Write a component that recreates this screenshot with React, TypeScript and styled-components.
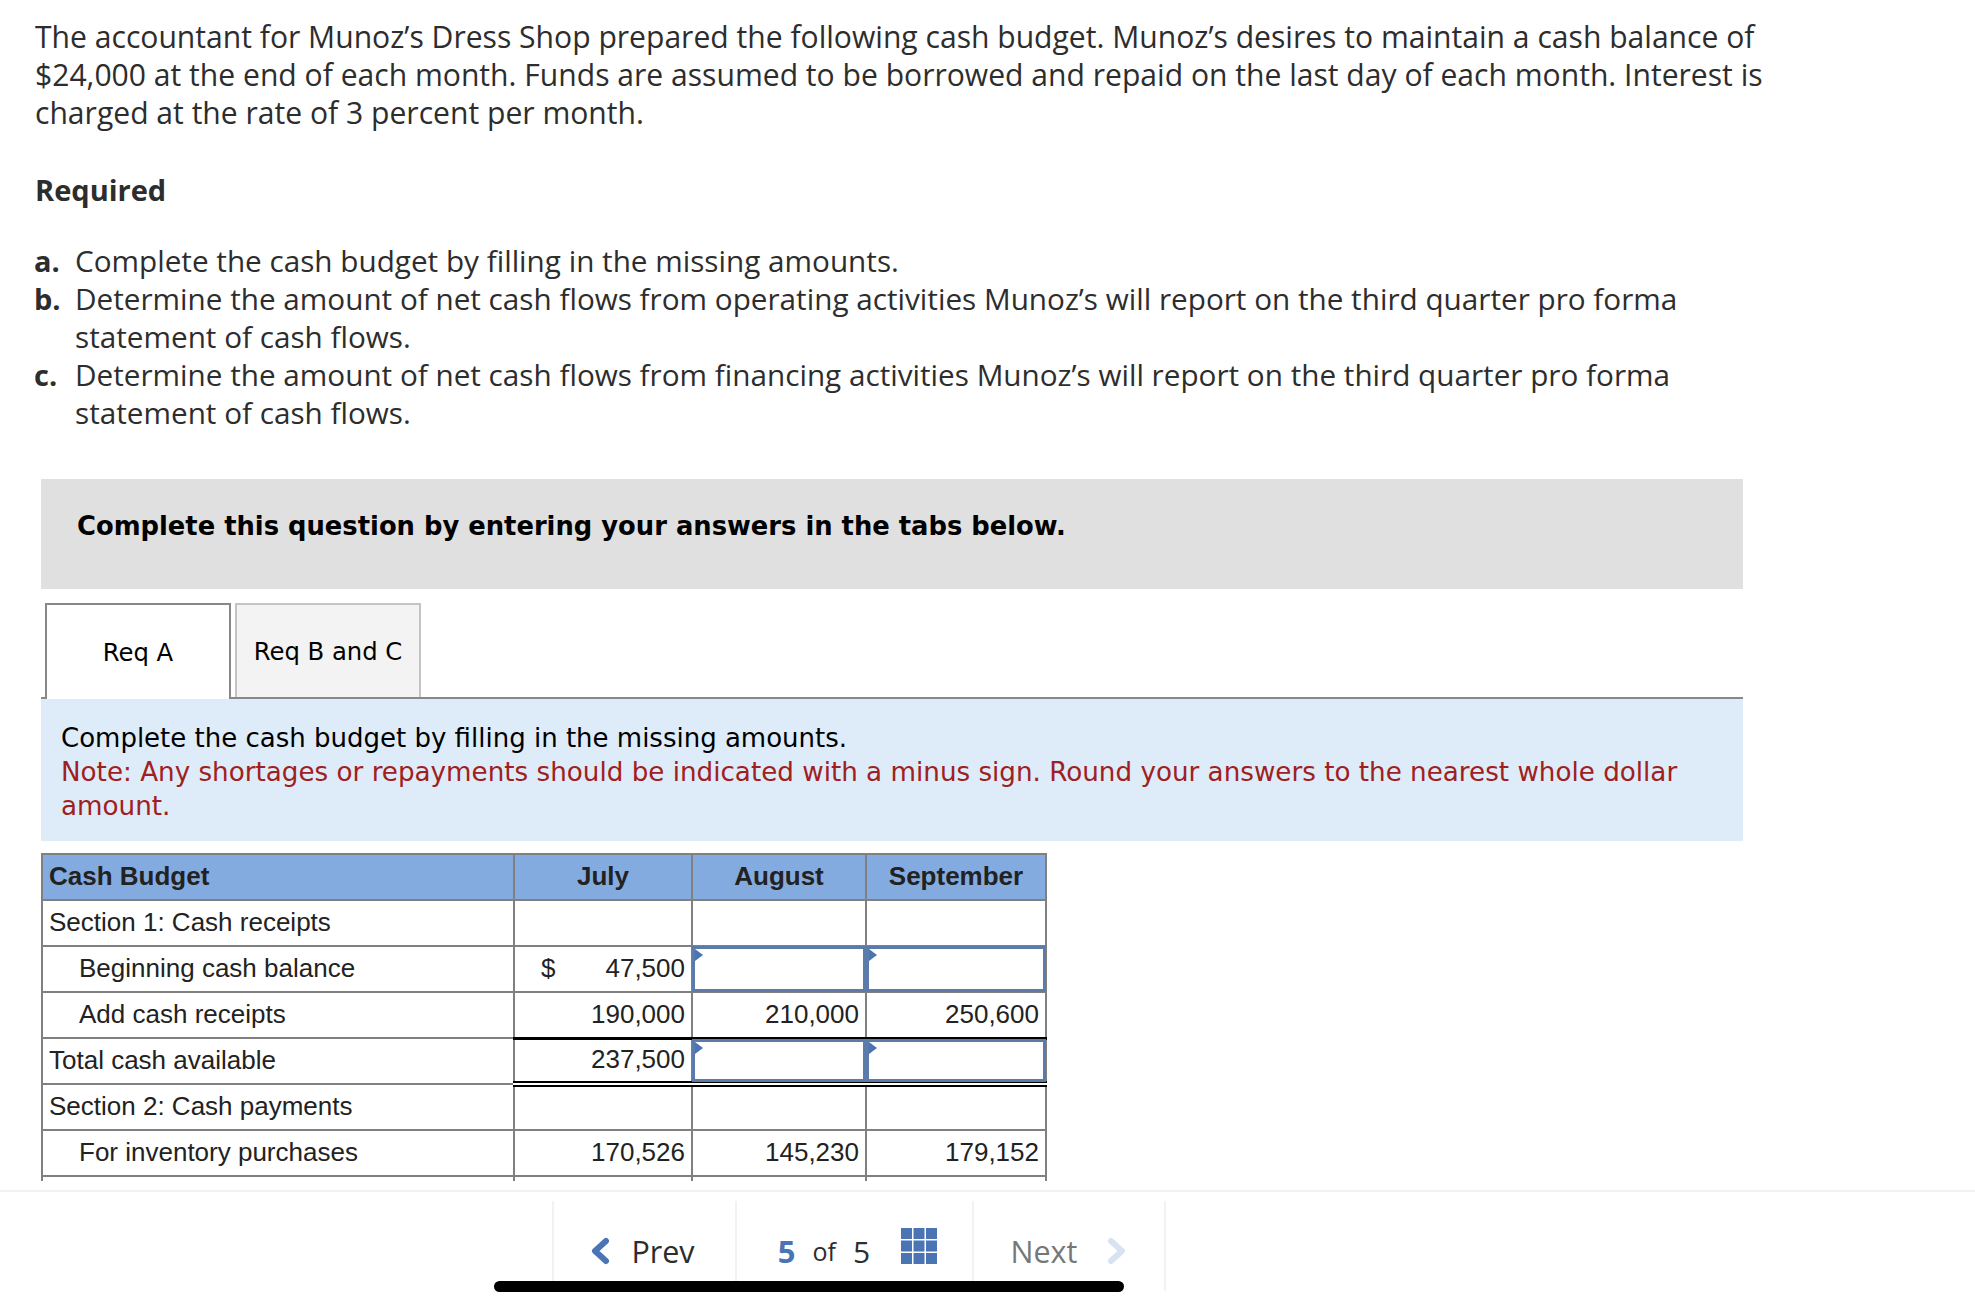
import React from 'react';
import styled, { createGlobalStyle } from 'styled-components';

const GlobalStyle = createGlobalStyle`
  html, body {
    margin: 0;
    padding: 0;
    background: #fff;
  }
`;

interface IRow {
  label: string;
  indent?: boolean;
  total?: boolean;
  dollar?: boolean;
  values: (string | null | undefined)[];
}

// null = answer box, undefined = empty cell
const rows: IRow[] = [
  { label: 'Section 1: Cash receipts', values: [undefined, undefined, undefined] },
  { label: 'Beginning cash balance', indent: true, dollar: true, values: ['47,500', null, null] },
  { label: 'Add cash receipts', indent: true, values: ['190,000', '210,000', '250,600'] },
  { label: 'Total cash available', total: true, values: ['237,500', null, null] },
  { label: 'Section 2: Cash payments', values: [undefined, undefined, undefined] },
  { label: 'For inventory purchases', indent: true, values: ['170,526', '145,230', '179,152'] },
  { label: '', indent: true, values: [undefined, undefined, undefined] },
];

export default function App(): JSX.Element {
  return (
    <Page>
      <GlobalStyle />
      <Content>
        <Intro>
          The accountant for Munoz’s Dress Shop prepared the following cash budget. Munoz’s desires
          to maintain a cash balance of $24,000 at the end of each month. Funds are assumed to be
          borrowed and repaid on the last day of each month. Interest is charged at the rate of 3
          percent per month.
        </Intro>
        <Required>Required</Required>
        <Parts>
          <Part>
            <PartKey>a.</PartKey>
            <span>Complete the cash budget by filling in the missing amounts.</span>
          </Part>
          <Part>
            <PartKey>b.</PartKey>
            <span>
              Determine the amount of net cash flows from operating activities Munoz’s will report
              on the third quarter pro forma statement of cash flows.
            </span>
          </Part>
          <Part>
            <PartKey>c.</PartKey>
            <span>
              Determine the amount of net cash flows from financing activities Munoz’s will report
              on the third quarter pro forma statement of cash flows.
            </span>
          </Part>
        </Parts>

        <Question>
          <Banner>Complete this question by entering your answers in the tabs below.</Banner>
          <Tabs>
            <Tab $active>Req A</Tab>
            <Tab>Req B and C</Tab>
          </Tabs>
          <Instructions>
            Complete the cash budget by filling in the missing amounts.
            <Note>
              Note: Any shortages or repayments should be indicated with a minus sign. Round your
              answers to the nearest whole dollar amount.
            </Note>
          </Instructions>
          <TableClip>
            <Budget>
              <colgroup>
                <col style={{ width: 472 }} />
                <col style={{ width: 178 }} />
                <col style={{ width: 174 }} />
                <col style={{ width: 180 }} />
              </colgroup>
              <thead>
                <tr>
                  <HeadCell $left>Cash Budget</HeadCell>
                  <HeadCell>July</HeadCell>
                  <HeadCell>August</HeadCell>
                  <HeadCell>September</HeadCell>
                </tr>
              </thead>
              <tbody>
                {rows.map(row => (
                  <tr key={row.label || 'next'}>
                    <LabelCell $indent={row.indent}>{row.label}</LabelCell>
                    {row.values.map((value, i) => (
                      <AmountCell key={i} $total={row.total} $answer={value === null}>
                        {value === null ? (
                          <AnswerBox />
                        ) : (
                          <Amount>
                            {row.dollar && i === 0 ? <span>$</span> : <span />}
                            <span>{value}</span>
                          </Amount>
                        )}
                      </AmountCell>
                    ))}
                  </tr>
                ))}
              </tbody>
            </Budget>
          </TableClip>
        </Question>
      </Content>

      <Footer>
        <Pager>
          <PagerItem $width={183} $gap={21} $shiftRight={4}>
            <Chevron viewBox="0 0 20 28" width="20" height="28" color="#4a74b4">
              <path d="M16 4 L5 14 L16 24" />
            </Chevron>
            <PagerLabel>Prev</PagerLabel>
          </PagerItem>
          <PagerItem $width={237} $gap={17} $shift={6}>
            <Current>5</Current>
            <Of>of</Of>
            <Total>5</Total>
            <GridIcon viewBox="0 0 36 36" width="36" height="36" fill="#4a74b4">
              {[0, 12.5, 25].flatMap(y =>
                [0, 12.5, 25].map(x => <rect key={`${x}-${y}`} x={x} y={y} width="11" height="11" />)
              )}
            </GridIcon>
          </PagerItem>
          <PagerItem $width={194} $gap={30} $last>
            <PagerLabel $muted>Next</PagerLabel>
            <Chevron viewBox="0 0 20 28" width="20" height="28" color="#d8e2f0">
              <path d="M4 4 L15 14 L4 24" />
            </Chevron>
          </PagerItem>
        </Pager>
        <HomeBar />
      </Footer>
    </Page>
  );
}

const Page = styled.div`
  position: relative;
  width: 1975px;
  height: 1307px;
  overflow: hidden;
  background: #fff;
`;

const Content = styled.div`
  height: 1190px;
  padding: 18px 0 0 35px;
  box-sizing: border-box;
  overflow: hidden;
  font-family: 'Open Sans', 'Liberation Sans', sans-serif;
  font-size: 30.1px;
  line-height: 38px;
  color: #2d2d2d;
`;

const Intro = styled.p`
  margin: 0;
  width: 1775px;
`;

const Required = styled.h3`
  margin: 39px 0 0;
  font-size: 29px;
  line-height: 38px;
  font-weight: 700;
`;

const Parts = styled.div`
  margin-top: 33px;
  width: 1680px;
  font-size: 29.7px;
`;

const Part = styled.div`
  display: flex;
`;

const PartKey = styled.b`
  flex: 0 0 41px;
  margin-left: -1px;
  font-size: 29px;
`;

const Question = styled.div`
  margin: 47px 0 0 6px;
  width: 1702px;
`;

const Banner = styled.div`
  height: 110px;
  padding: 30px 0 0 36px;
  box-sizing: border-box;
  background: #e0e0e0;
  color: #000;
  font-family: 'DejaVu Sans', Verdana, sans-serif;
  font-weight: 700;
  font-size: 25.8px;
  line-height: 34px;
`;

const Tabs = styled.div`
  display: flex;
  gap: 4px;
  margin-top: 14px;
  padding-left: 4px;
  border-bottom: 2px solid #888;
  height: 94px;
`;

const Tab = styled.div<{ $active?: boolean }>`
  width: 186px;
  height: ${p => (p.$active ? 96 : 94)}px;
  padding-top: 2px;
  box-sizing: border-box;
  display: flex;
  align-items: center;
  justify-content: center;
  border: 2px solid ${p => (p.$active ? '#888' : '#c4c4c4')};
  border-bottom: 0;
  background: ${p => (p.$active ? '#fff' : '#f3f3f3')};
  color: #000;
  font-family: 'DejaVu Sans', Verdana, sans-serif;
  font-size: 24.3px;
`;

const Instructions = styled.div`
  padding: 22px 20px 18px;
  background: #deebf8;
  color: #000;
  font-family: 'DejaVu Sans', Verdana, sans-serif;
  font-size: 26px;
  line-height: 34px;
`;

const Note = styled.div`
  color: #a02020;
  font-size: 26.2px;
`;

const TableClip = styled.div`
  margin-top: 12px;
  height: 328px;
  overflow: hidden;
`;

const Budget = styled.table`
  width: 1004px;
  table-layout: fixed;
  border-collapse: collapse;
  font-family: 'Liberation Sans', Arial, sans-serif;
  font-size: 26px;
  color: #222;

  th,
  td {
    height: 46px;
    padding: 0 0 2px;
    box-sizing: border-box;
    border: 2px solid #808080;
  }
`;

const HeadCell = styled.th<{ $left?: boolean }>`
  background: #84abe0;
  font-weight: 700;
  text-align: ${p => (p.$left ? 'left' : 'center')};
  padding-left: ${p => (p.$left ? '6px' : '0')} !important;
`;

const LabelCell = styled.td<{ $indent?: boolean }>`
  padding-left: ${p => (p.$indent ? '36px' : '6px')} !important;
`;

const AmountCell = styled.td<{ $total?: boolean; $answer?: boolean }>`
  ${p =>
    p.$total &&
    `
    border-top: 3px solid #000 !important;
    border-bottom: 6px double #000 !important;
  `}
  ${p => p.$answer && 'position: relative;'}
`;

const Amount = styled.div`
  display: flex;
  justify-content: space-between;
  padding: 0 6px 0 26px;
`;

const AnswerBox = styled.div`
  position: absolute;
  inset: -1px;
  border: 3px solid #5b7bab;

  &::before {
    content: '';
    position: absolute;
    left: 0;
    top: 0;
    border-left: 8px solid #4a74b4;
    border-top: 6px solid transparent;
    border-bottom: 6px solid transparent;
  }
`;

const Footer = styled.div`
  border-top: 2px solid #f2f2f2;
  padding: 9px 0 0 552px;
  font-family: 'Open Sans', 'Liberation Sans', sans-serif;
`;

const Pager = styled.div`
  display: flex;
  height: 90px;
`;

const PagerItem = styled.div<{
  $width: number;
  $gap: number;
  $shift?: number;
  $shiftRight?: number;
  $last?: boolean;
}>`
  width: ${p => p.$width}px;
  box-sizing: border-box;
  display: flex;
  align-items: center;
  justify-content: center;
  gap: ${p => p.$gap}px;
  padding-top: 10px;
  padding-left: ${p => p.$shift || 0}px;
  padding-right: ${p => p.$shiftRight || 0}px;
  border-left: 2px solid #f2f2f2;
  ${p => p.$last && 'border-right: 2px solid #f2f2f2;'}
`;

const Chevron = styled.svg<{ color: string }>`
  fill: none;
  stroke: ${p => p.color};
  stroke-width: 6;
  stroke-linecap: round;
  stroke-linejoin: round;
`;

const GridIcon = styled.svg`
  margin: -10px 0 0 14px;
`;

const PagerLabel = styled.span<{ $muted?: boolean }>`
  font-size: 30.5px;
  color: ${p => (p.$muted ? '#777' : '#2d2d2d')};
`;

const Current = styled.b`
  font-size: 31px;
  color: #4a74b4;
`;

const Of = styled.span`
  font-size: 25px;
  color: #2d2d2d;
`;

const Total = styled.span`
  font-size: 30px;
  color: #2d2d2d;
`;

const HomeBar = styled.div`
  position: absolute;
  left: 494px;
  top: 1281px;
  width: 630px;
  height: 11px;
  border-radius: 6px;
  background: #000;
`;
